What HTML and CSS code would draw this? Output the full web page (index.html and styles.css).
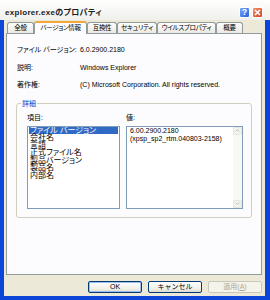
FILE: index.html
```html
<!DOCTYPE html>
<html lang="ja">
  <head>
    <meta charset="UTF-8" />
    <meta name="viewport" content="width=device-width, initial-scale=1.0" />
    <title>explorer.exeのプロパティ</title>
    <link rel="stylesheet" href="styles.css">
  </head>
  <body>
    <div class="window">
      <div class="titlebar">
        <span class="title">explorer.exeのプロパティ</span>
        <div class="caption-buttons">
          <span class="cap-btn help">?</span>
          <span class="cap-btn close">
            <svg width="7" height="7" viewBox="0 0 7 7"><path d="M1 1L6 6M6 1L1 6" stroke="#fff" stroke-width="1.6"/></svg>
          </span>
        </div>
      </div>

      <div class="frame">
        <div class="tabs">
          <div class="tab tab-general">全般</div>
          <div class="tab tab-version active">バージョン情報</div>
          <div class="tab tab-compat">互換性</div>
          <div class="tab tab-security">セキュリティ</div>
          <div class="tab tab-virus">ウイルスプロパティ</div>
          <div class="tab tab-summary">概要</div>
        </div>

        <div class="panel">
          <div class="info">
            <span>ファイル バージョン:</span>
            <span>6.0.2900.2180</span>
            <span>説明:</span>
            <span>Windows Explorer</span>
            <span>著作権:</span>
            <span>(C) Microsoft Corporation. All rights reserved.</span>
          </div>

          <fieldset class="details">
            <legend>詳細</legend>
            <div class="columns">
              <div class="col">
                <div class="col-label">項目:</div>
                <div class="listbox">
                  <div class="list-item selected">ファイル バージョン</div>
                  <div class="list-item">会社名</div>
                  <div class="list-item">言語</div>
                  <div class="list-item">正式ファイル名</div>
                  <div class="list-item">製品バージョン</div>
                  <div class="list-item">製品名</div>
                  <div class="list-item">内部名</div>
                </div>
              </div>
              <div class="col">
                <div class="col-label">値:</div>
                <div class="valuebox">
                  <div class="value-text">
                    6.00.2900.2180<br>
                    (xpsp_sp2_rtm.040803-2158)
                  </div>
                  <div class="scrollbar">
                    <div class="scroll-btn">
                      <svg width="5" height="3" viewBox="0 0 5 3"><path d="M0.5 2.5L2.5 0.5L4.5 2.5" fill="none" stroke="#c6c5bc"/></svg>
                    </div>
                    <div class="scroll-btn">
                      <svg width="5" height="3" viewBox="0 0 5 3"><path d="M0.5 0.5L2.5 2.5L4.5 0.5" fill="none" stroke="#c6c5bc"/></svg>
                    </div>
                  </div>
                </div>
              </div>
            </div>
          </fieldset>
        </div>

        <div class="buttons">
          <button class="btn default">OK</button>
          <button class="btn">キャンセル</button>
          <button class="btn" disabled>適用(<span class="u">A</span>)</button>
        </div>
      </div>
    </div>
  </body>
</html>
```

FILE: styles.css
```css
* {
  margin: 0;
  padding: 0;
  box-sizing: border-box;
}

body {
  width: 270px;
  height: 300px;
  overflow: hidden;
  font-family: "Liberation Sans", "Noto Sans CJK JP", sans-serif;
  font-size: 7px;
  font-feature-settings: "palt";
  color: #000;
  background-color: #ece9d8;
}

.window {
  height: 300px;
  display: flex;
  flex-direction: column;
}

/* title bar */
.titlebar {
  height: 20px;
  display: flex;
  align-items: center;
  justify-content: space-between;
  padding: 5px 7px 0 5px;
  background: linear-gradient(#ffffff, #efefec);
}

.title {
  font-size: 8px;
  font-weight: bold;
  letter-spacing: 0.3px;
  line-height: 10px;
  color: #1c1c1c;
}

.caption-buttons {
  display: flex;
  gap: 2px;
}

.cap-btn {
  width: 11px;
  height: 11px;
  border: 1px solid #fff;
  border-radius: 2px;
  display: flex;
  align-items: center;
  justify-content: center;
  color: #fff;
  font-size: 9px;
  font-weight: bold;
  line-height: 1;
}

.help {
  background: linear-gradient(135deg, #76a6f7, #2561e2);
}

.close {
  background: linear-gradient(135deg, #f09070, #d5411d);
}

/* window body */
.frame {
  flex: 1;
  display: flex;
  flex-direction: column;
  border: 4px solid #0b46d9;
  border-top: none;
  border-right-width: 5px;
  padding: 2px 3px 3px 2px;
  background-color: #ece9d8;
}

.tabs {
  display: flex;
  align-items: flex-end;
  height: 11px;
  padding-left: 1px;
}

.tab {
  flex: none;
  height: 11px;
  border: 1px solid #919b9c;
  border-bottom: none;
  border-radius: 3px 3px 0 0;
  background: linear-gradient(#fefefe, #eae9e3);
  font-size: 6.5px;
  letter-spacing: -0.3px;
  line-height: 10px;
  text-align: center;
  white-space: nowrap;
  overflow: hidden;
}

.tab-general { width: 27px; }
.tab-version { width: 53px; }
.tab-compat { width: 30px; }
.tab-security { width: 40px; }
.tab-virus { width: 59px; }
.tab-summary { width: 27px; }

.tab.active {
  position: relative;
  height: 13px;
  margin-bottom: -1px;
  border-top: 2px solid #f2a73a;
  background: #fcfcfe;
}

.panel {
  flex: 1;
  border: 1px solid #919b9c;
  background-color: #fcfcfe;
  padding: 11px 9px 0 9px;
}

.info {
  display: grid;
  grid-template-columns: 63px 1fr;
  grid-auto-rows: 9px;
  row-gap: 8.5px;
  line-height: 9px;
  padding-left: 1px;
  white-space: nowrap;
}

/* details group */
.details {
  margin-top: 10px;
  border: 1px solid #d0d0bf;
  border-radius: 3px;
  padding: 5px 8px 8px 10px;
}

.details legend {
  margin-left: -6px;
  padding: 0 1px;
  line-height: 9px;
  color: #0046d5;
}

.columns {
  display: flex;
  gap: 6px;
}

.col-label {
  line-height: 9px;
  margin-bottom: 3.5px;
}

.listbox {
  width: 93px;
  height: 83px;
  border: 1px solid #7f9db9;
  background-color: #fff;
  padding: 0 1px;
}

.list-item {
  height: 7.5px;
  line-height: 7.5px;
  font-size: 8px;
  padding-left: 1px;
  white-space: nowrap;
}

.list-item.selected {
  background-color: #316ac5;
  color: #fff;
}

.valuebox {
  width: 117px;
  height: 83px;
  border: 1px solid #7f9db9;
  background-color: #fff;
  display: flex;
}

.value-text {
  flex: 1;
  padding: 0 2px 0 3px;
  line-height: 8px;
  white-space: nowrap;
}

.scrollbar {
  width: 9px;
  display: flex;
  flex-direction: column;
  justify-content: space-between;
  background-color: #f8f8f5;
}

.scroll-btn {
  height: 8px;
  border: 1px solid #e8e7df;
  border-radius: 1px;
  background-color: #f3f3ee;
  display: flex;
  align-items: center;
  justify-content: center;
}

/* dialog buttons */
.buttons {
  display: flex;
  justify-content: flex-end;
  gap: 6px;
  margin-top: 6px;
}

.btn {
  width: 54px;
  height: 12px;
  border: 1px solid #003c74;
  border-radius: 2px;
  background: linear-gradient(#ffffff, #f0efe8 70%, #dcd8cc);
  font-family: inherit;
  font-size: 7px;
  line-height: 10px;
  color: #000;
  text-align: center;
}

.btn.default {
  box-shadow: inset 0 0 0 1px #9fbdea;
}

.btn:disabled {
  border-color: #c9c7ba;
  background: #f5f4ea;
  color: #aca899;
}

.btn .u {
  text-decoration: underline;
}
```
